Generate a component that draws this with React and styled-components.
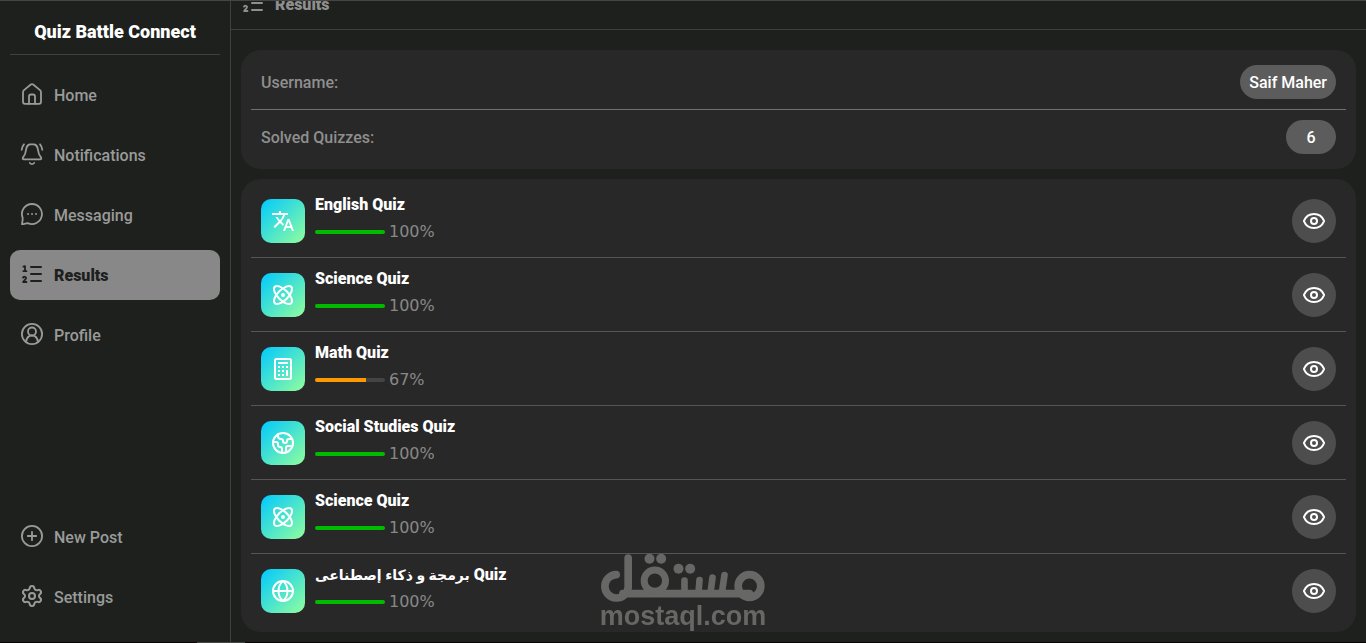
import React from "react";
import styled, { createGlobalStyle } from "styled-components";
import { Atom, Earth, Eye, Settings } from "lucide-react";
import { MdTranslate } from "react-icons/md";

const links = [
  { label: "Home", icon: HomeIcon },
  { label: "Notifications", icon: BellIcon },
  { label: "Messaging", icon: MessageIcon },
  { label: "Results", icon: ListIcon, active: true },
  { label: "Profile", icon: ProfileIcon },
];

const quizzes = [
  { name: "English", score: "100%", bar: 100, icon: MdTranslate },
  { name: "Science", score: "100%", bar: 100, icon: Atom },
  { name: "Math", score: "67%", bar: 73, icon: CalculatorIcon },
  { name: "Social Studies", score: "100%", bar: 100, icon: Earth },
  { name: "Science", score: "100%", bar: 100, icon: Atom },
  { name: "برمجة و ذكاء إصطناعى", arabic: true, score: "100%", bar: 100, icon: GlobeIcon },
];

function App() {
  return (
    <>
      <GlobalStyle />
      <Page>
        <Sidebar>
          <Brand>Quiz Battle Connect</Brand>
          <Nav>
            {links.map(({ label, icon: Icon, active }) => (
              <NavLink href="#" key={label} $active={active}>
                <Icon />
                {label}
              </NavLink>
            ))}
          </Nav>
          <BottomNav>
            <NavLink href="#">
              <PlusIcon />
              New Post
            </NavLink>
            <NavLink href="#">
              <Settings size={24} viewBox="0 1 24 24" />
              Settings
            </NavLink>
          </BottomNav>
        </Sidebar>
        <Main>
          <Header>
            <HeaderTitle>
              <ListIcon />
              Results
            </HeaderTitle>
          </Header>
          <Content>
            <Card>
              <InfoRow>
                <InfoLabel>Username:</InfoLabel>
                <Pill>Saif Maher</Pill>
              </InfoRow>
              <InfoRow>
                <InfoLabel>Solved Quizzes:</InfoLabel>
                <Pill>6</Pill>
              </InfoRow>
            </Card>
            <Card>
              {quizzes.map((quiz, i) => (
                <QuizRow key={i}>
                  <Tile>
                    <quiz.icon size={24} />
                  </Tile>
                  <QuizInfo>
                    <QuizName>
                      <Subject $arabic={quiz.arabic}>{quiz.name}</Subject> Quiz
                    </QuizName>
                    <Score>
                      <Track>
                        <Fill $full={quiz.bar === 100} style={{ width: `${quiz.bar}%` }} />
                      </Track>
                      {quiz.score}
                    </Score>
                  </QuizInfo>
                  <ViewButton aria-label={`View ${quiz.name} Quiz`}>
                    <Eye size={24} />
                  </ViewButton>
                </QuizRow>
              ))}
            </Card>
          </Content>
        </Main>
      </Page>
      <StatusStrip>
        <StripThumb />
      </StatusStrip>
      <Watermark>
        <MostaqlLogo />
        <WatermarkText>mostaql.com</WatermarkText>
      </Watermark>
    </>
  );
}

function LineIcon({ children }) {
  return (
    <svg
      width="24"
      height="24"
      viewBox="0 1 24 24"
      fill="none"
      stroke="currentColor"
      strokeWidth="1.8"
      strokeLinecap="round"
      strokeLinejoin="round"
      aria-hidden="true"
    >
      {children}
    </svg>
  );
}

function HomeIcon() {
  return (
    <LineIcon>
      <path d="M10.8 2.5 4 8.1Q3 9 3 10.4V19.8A2 2 0 0 0 5 21.8H19A2 2 0 0 0 21 19.8V10.4Q21 9 20 8.1L13.2 2.5Q12 1.6 10.8 2.5Z" />
      <path d="M9 21.8V14.5a2 2 0 0 1 2-2h2a2 2 0 0 1 2 2v7.3" />
    </LineIcon>
  );
}

function BellIcon() {
  return (
    <LineIcon>
      <path d="M12 2C8.2 2 6.4 4.6 6.1 7.5 5.8 11.4 4.8 13.2 2.9 15.6 2.4 16.5 2.8 17.3 3.8 17.3H20.2C21.2 17.3 21.6 16.5 21.1 15.6 19.2 13.2 18.2 11.4 17.9 7.5 17.6 4.6 15.8 2 12 2Z" />
      <path d="M4 2.3Q1.9 4.5 1.7 7.8M20 2.3Q22.1 4.5 22.3 7.8M9.8 21Q12 23.4 14.2 21" />
    </LineIcon>
  );
}

function MessageIcon() {
  return (
    <LineIcon>
      <path d="M12 2A10 10 0 1 1 7.8 21.1C6 21 4.4 22.2 2 22.2 2.2 20 2.9 18.4 2.6 15.6A10 10 0 0 1 12 2Z" />
      <path d="M8 12h.1M12 12h.1M16 12h.1" />
    </LineIcon>
  );
}

function ListIcon() {
  return (
    <LineIcon>
      <path d="M11 5h10M11 12h10M11 19h10" strokeWidth="2" />
      <path d="M3.4 4.7 5 4.2V9M3.4 9.2h3M3 15.7c.3-1.4 3.2-1.2 3 .4-.1 1.2-1.6 2.2-2.9 3.9h3.4" />
    </LineIcon>
  );
}

function ProfileIcon() {
  return (
    <LineIcon>
      <circle cx="12" cy="12" r="10.1" />
      <circle cx="12" cy="9.5" r="4" />
      <path d="M6 20C6.6 15.8 9 13.5 12 13.5s5.4 2.3 6 6.5" />
    </LineIcon>
  );
}

function PlusIcon() {
  return (
    <LineIcon>
      <circle cx="12" cy="12" r="10.1" />
      <path d="M7.8 12h8.4M12 7.8v8.4" />
    </LineIcon>
  );
}

function CalculatorIcon() {
  return (
    <svg width="24" height="24" viewBox="0 0 24 24" fill="currentColor" aria-hidden="true">
      <rect x="4" y="2" width="16" height="20" rx="1.5" fill="none" stroke="currentColor" strokeWidth="2" />
      <path d="M7 5h10v2H7zM7 9h2v2H7zM11 9h2v2h-2zM15 9h2v2h-2zM7 13h2v2H7zM11 13h2v2h-2zM7 17h2v2H7zM11 17h2v2h-2zM15 13h2v6h-2z" />
    </svg>
  );
}

function GlobeIcon() {
  return (
    <svg
      width="24"
      height="24"
      viewBox="0 0 24 24"
      fill="none"
      stroke="currentColor"
      strokeWidth="2"
      aria-hidden="true"
    >
      <circle cx="12" cy="12" r="10" />
      <path d="M2 12h20M12 2c-6 5-6 15 0 20M12 2c6 5 6 15 0 20" />
    </svg>
  );
}

function MostaqlLogo() {
  return (
    <svg
      width="167"
      height="50"
      viewBox="30 25 501 150"
      fill="none"
      stroke="currentColor"
      strokeLinecap="round"
      role="img"
      aria-label="مستقل"
    >
      <path d="M80 90A35 35 0 1 0 116 128V40M100 147H480" strokeWidth="23" />
      <circle cx="196" cy="108" r="32" strokeWidth="21" />
      <circle cx="480" cy="124" r="34" strokeWidth="23" />
      <path d="M285 108V145M330 106 327 145M369 99 363 145M405 91 397 145" strokeWidth="20" />
      <g fill="currentColor" stroke="none">
        <circle cx="180" cy="42" r="15" />
        <circle cx="215" cy="42" r="15" />
        <circle cx="267" cy="72" r="15" />
        <circle cx="302" cy="72" r="15" />
      </g>
    </svg>
  );
}

const GlobalStyle = createGlobalStyle`
  * {
    box-sizing: border-box;
  }
  body {
    margin: 0;
    background: #1e201e;
    color: #8f8f8f;
    font-family: Roboto, "DejaVu Sans", sans-serif;
    font-size: 16px;
    line-height: 20px;
  }
  svg {
    display: block;
    flex-shrink: 0;
  }
`;

const Page = styled.div`
  display: flex;
  min-height: calc(100vh - 1px);
  border-top: 1px solid #444644;
`;

const Sidebar = styled.aside`
  display: flex;
  flex-direction: column;
  flex-shrink: 0;
  width: 231px;
  padding: 9px 10px 20px;
  border-right: 1px solid #3f413f;
`;

const Brand = styled.h1`
  margin: 0;
  padding: 12px 0;
  border-bottom: 1px solid #3f413f;
  color: white;
  font-size: 18px;
  font-weight: 900;
  line-height: 20px;
  text-align: center;
`;

const Nav = styled.nav`
  display: flex;
  flex-direction: column;
  gap: 10px;
  margin-top: 15px;
`;

const BottomNav = styled(Nav)`
  margin-top: auto;
`;

const NavLink = styled.a`
  display: flex;
  align-items: center;
  gap: 10px;
  height: 50px;
  padding: 2px 10px 0;
  border-radius: 10px;
  background: ${(props) => (props.$active ? "#888888" : "transparent")};
  color: ${(props) => (props.$active ? "#1e201e" : "#999b99")};
  font-weight: ${(props) => (props.$active ? 900 : 500)};
  text-decoration: none;

  svg {
    margin-bottom: 2px;
  }
`;

const Main = styled.main`
  flex: 1;
  min-width: 0;
`;

/* the header is half scrolled out of view */
const Header = styled.header`
  display: flex;
  align-items: flex-end;
  height: 29px;
  padding: 0 10px;
  border-bottom: 1px solid #3f413f;
  overflow: hidden;
`;

const HeaderTitle = styled.div`
  display: flex;
  align-items: center;
  flex-shrink: 0;
  gap: 10px;
  height: 50px;
  padding-top: 2px;
  font-weight: 900;

  svg {
    margin-bottom: 2px;
  }
`;

const Content = styled.div`
  display: flex;
  flex-direction: column;
  gap: 10px;
  padding: 20px 10px 10px;
`;

const Card = styled.section`
  padding: 5px 10px;
  border-radius: 20px;
  background: #282828;
`;

const InfoRow = styled.div`
  display: flex;
  align-items: center;
  justify-content: space-between;
  padding: 10px;
  font-weight: 500;

  & + & {
    border-top: 1px solid #707070;
  }
`;

const InfoLabel = styled.span`
  padding-top: 2px;
`;

const Pill = styled.span`
  min-width: 50px;
  padding: 8px 9px 6px;
  border-radius: 17px;
  background: #5c5c5c;
  color: white;
  text-align: center;
`;

const QuizRow = styled.div`
  display: flex;
  align-items: center;
  gap: 10px;
  padding: 10px 10px 9px;

  & + & {
    border-top: 1px solid #555555;
  }
`;

const Tile = styled.div`
  display: flex;
  align-items: center;
  justify-content: center;
  width: 44px;
  height: 44px;
  border-radius: 10px;
  background: linear-gradient(135deg, #00c9ff, #92fe9d);
  color: white;
`;

const QuizInfo = styled.div`
  display: flex;
  flex-direction: column;
  flex: 1;
  gap: 6px;
  padding-bottom: 6px;
`;

const QuizName = styled.div`
  color: white;
  font-weight: 900;
  line-height: 22px;
`;

const Subject = styled.span`
  font-size: ${(props) => (props.$arabic ? "14px" : "16px")};
`;

const Score = styled.div`
  display: flex;
  align-items: center;
  gap: 4px;
  color: #888888;
  font-family: "DejaVu Sans", sans-serif;
`;

const Track = styled.div`
  width: 70px;
  height: 4px;
  border-radius: 2px;
  background: #444444;
  overflow: hidden;
`;

const Fill = styled.div`
  height: 100%;
  background: ${(props) => (props.$full ? "#00bb00" : "#ff9900")};
`;

const ViewButton = styled.button`
  display: flex;
  align-items: center;
  justify-content: center;
  width: 44px;
  height: 44px;
  padding: 0;
  border: none;
  border-radius: 50%;
  background: #4d4d4d;
  color: white;
  cursor: pointer;
`;

const StatusStrip = styled.div`
  height: 1px;
  padding-left: 197px;
  background: #0a0505;
`;

const StripThumb = styled.div`
  width: 48px;
  height: 1px;
  background: #444644;
`;

const Watermark = styled.div`
  position: fixed;
  bottom: 14px;
  left: 50%;
  display: flex;
  flex-direction: column;
  align-items: center;
  transform: translateX(-50%);
  color: #676766;
  pointer-events: none;
`;

const WatermarkText = styled.span`
  font-family: "Liberation Sans", Arial, sans-serif;
  font-size: 27px;
  font-weight: bold;
  line-height: 26px;
`;

export default App;
